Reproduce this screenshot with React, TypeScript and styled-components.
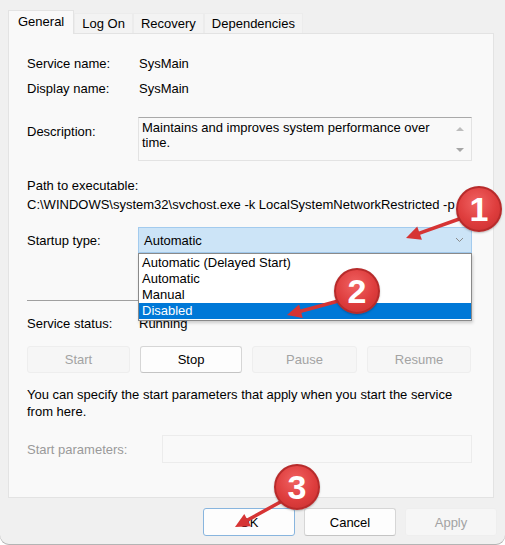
import styled, { createGlobalStyle, css } from 'styled-components'

const GlobalStyle = createGlobalStyle`
  html, body {
    margin: 0;
    padding: 0;
    background: #ffffff;
  }
  body {
    font-family: 'Liberation Sans', Arial, sans-serif;
    font-size: 13px;
    color: #000;
  }
`

const Window = styled.div`
  position: relative;
  width: 505px;
  height: 545px;
  background: #f0f0f0;
  border-radius: 0 0 9px 9px;
  overflow: hidden;
  box-shadow: inset 0 -1px 0 #b4b4b4;
`

const TabStrip = styled.div`
  display: flex;
  align-items: flex-end;
  height: 33px;
  padding-left: 8px;
`

const Tab = styled.div<{ $active?: boolean }>`
  box-sizing: border-box;
  height: 20px;
  padding: 0 7px;
  line-height: 20px;
  background: #f3f3f3;
  border: 1px solid #ececec;
  border-bottom: none;
  white-space: nowrap;

  ${(p) =>
    p.$active &&
    css`
      height: 24px;
      line-height: 22px;
      background: #f9f9f9;
      border-color: #e3e3e3;
      margin-bottom: -1px;
      position: relative;
      z-index: 1;
      padding: 0 9px;
    `}
`

const Panel = styled.div`
  box-sizing: border-box;
  margin: 0 11px 0 8px;
  height: 465px;
  background: #f9f9f9;
  border: 1px solid #e3e3e3;
  padding: 19px 21px 0 18px;
  position: relative;
`

const Row = styled.div<{ $top?: number; $height?: number; $label?: number }>`
  display: grid;
  grid-template-columns: ${(p) => p.$label ?? 111}px 1fr;
  align-items: center;
  margin-top: ${(p) => p.$top ?? 0}px;
  height: ${(p) => p.$height ?? 20}px;
`

const TopRow = styled(Row)`
  align-items: start;
`

const Label = styled.span<{ $disabled?: boolean; $offset?: number }>`
  color: ${(p) => (p.$disabled ? '#9a9a9a' : '#000')};
  padding-top: ${(p) => p.$offset ?? 0}px;
  white-space: nowrap;
`

const Value = styled.span`
  padding-left: 1px;
  white-space: nowrap;
`

const TextBox = styled.div`
  position: relative;
  box-sizing: border-box;
  height: 44px;
  background: #f9f9f9;
  border: 1px solid #e3e3e3;
  border-top-color: #a9a9a9;
  padding: 2px 24px 0 3px;
  line-height: 15px;
`

const ScrollArrow = styled.span<{ $down?: boolean }>`
  position: absolute;
  right: 7px;
  ${(p) => (p.$down ? 'bottom: 8px;' : 'top: 9px;')}
  width: 0;
  height: 0;
  border-left: 4px solid transparent;
  border-right: 4px solid transparent;
  ${(p) => (p.$down ? 'border-top: 4px solid #a6a6a6;' : 'border-bottom: 4px solid #bdbdbd;')}
`

const Line = styled.div<{ $top?: number }>`
  margin-top: ${(p) => p.$top ?? 0}px;
  line-height: 18px;
  height: 18px;
  white-space: nowrap;
`

const ComboWrap = styled.div`
  position: relative;
  height: 26px;
`

const Combo = styled.div`
  box-sizing: border-box;
  height: 26px;
  background: #cce4f7;
  border: 1px solid #a3cbee;
  padding: 0 0 0 5px;
  display: flex;
  align-items: center;
  justify-content: space-between;
`

const Chevron = styled.svg`
  margin-right: 7px;
`

const DropList = styled.ul`
  position: absolute;
  top: 26px;
  left: 0;
  right: 0;
  margin: 0;
  padding: 1px 0 1px;
  list-style: none;
  background: #ffffff;
  border: 1px solid #8a8a8a;
  box-shadow: 1px 2px 3px rgba(0, 0, 0, 0.18);
  z-index: 5;
`

const DropItem = styled.li<{ $selected?: boolean }>`
  height: 16px;
  line-height: 16px;
  padding-left: 3px;
  white-space: nowrap;
  ${(p) =>
    p.$selected &&
    css`
      background: #0078d7;
      color: #ffffff;
    `}
`

const Separator = styled.div<{ $top?: number }>`
  margin-top: ${(p) => p.$top ?? 0}px;
  height: 1px;
  background: #a0a0a0;
`

const ButtonRow = styled.div`
  display: grid;
  grid-template-columns: 103px 102px 105px 104px;
  column-gap: 10px;
  margin-top: 13px;
  height: 27px;
`

const Button = styled.div<{ $disabled?: boolean; $default?: boolean }>`
  box-sizing: border-box;
  height: 27px;
  display: flex;
  align-items: center;
  justify-content: center;
  background: #fdfdfd;
  border: 1px solid #d6d6d6;
  border-bottom-color: #c4c4c4;
  border-radius: 3px;
  color: #000;

  ${(p) =>
    p.$disabled &&
    css`
      background: #f6f6f6;
      border-color: #eeeeee;
      color: #a3a3a3;
    `}

  ${(p) =>
    p.$default &&
    css`
      border-color: #88b5de;
      background: #fdfdfd;
    `}
`

const Paragraph = styled.p`
  margin: 13px 0 0;
  line-height: 17px;
`

const Input = styled.div`
  box-sizing: border-box;
  height: 28px;
  background: #f9f9f9;
  border: 1px solid #ececec;
`

const Footer = styled.div`
  display: flex;
  justify-content: flex-end;
  gap: 9px;
  margin-top: 10px;
  padding-right: 8px;
`

const FooterButton = styled(Button)`
  width: 92px;
  height: 28px;
`

const Overlay = styled.svg`
  position: absolute;
  left: 0;
  top: 0;
  pointer-events: none;
  z-index: 10;
`

const Badge = styled.div<{ $x: number; $y: number }>`
  position: absolute;
  left: ${(p) => p.$x - 23}px;
  top: ${(p) => p.$y - 23}px;
  width: 46px;
  height: 46px;
  box-sizing: border-box;
  border-radius: 50%;
  background: radial-gradient(circle at 45% 35%, #f06262 0%, #de3d3d 55%, #c62e2e 100%);
  border: 2px solid #b72b2b;
  box-shadow: 0 1px 2px rgba(0, 0, 0, 0.25);
  color: #ffffff;
  font-family: 'Liberation Sans', Arial, sans-serif;
  font-weight: bold;
  font-size: 34px;
  line-height: 42px;
  text-align: center;
  z-index: 11;
`

type Arrow = { x1: number; y1: number; x2: number; y2: number }

const arrows: Arrow[] = [
  { x1: 462, y1: 218, x2: 406, y2: 238 },
  { x1: 342, y1: 300, x2: 287, y2: 315 },
  { x1: 284, y1: 500, x2: 235, y2: 527 },
]

const arrowHead = ({ x1, y1, x2, y2 }: Arrow) => {
  const a = Math.atan2(y2 - y1, x2 - x1)
  const len = 16
  const spread = 0.45
  const p1 = [x2 - len * Math.cos(a - spread), y2 - len * Math.sin(a - spread)]
  const p2 = [x2 - len * Math.cos(a + spread), y2 - len * Math.sin(a + spread)]
  return `${x2},${y2} ${p1[0]},${p1[1]} ${p2[0]},${p2[1]}`
}

const badges = [
  { n: 1, x: 479, y: 209 },
  { n: 2, x: 357, y: 291 },
  { n: 3, x: 297, y: 487 },
]

export default function App() {
  return (
    <>
      <GlobalStyle />
      <Window>
        <TabStrip>
          <Tab $active>General</Tab>
          <Tab>Log On</Tab>
          <Tab>Recovery</Tab>
          <Tab>Dependencies</Tab>
        </TabStrip>

        <Panel>
          <Row>
            <Label>Service name:</Label>
            <Value>SysMain</Value>
          </Row>
          <Row $top={5}>
            <Label>Display name:</Label>
            <Value>SysMain</Value>
          </Row>
          <TopRow $top={19} $height={44}>
            <Label $offset={7}>Description:</Label>
            <TextBox>
              Maintains and improves system performance over time.
              <ScrollArrow />
              <ScrollArrow $down />
            </TextBox>
          </TopRow>

          <Line $top={16}>Path to executable:</Line>
          <Line $top={1}>C:\WINDOWS\system32\svchost.exe -k LocalSystemNetworkRestricted -p</Line>

          <Row $top={13} $height={26}>
            <Label>Startup type:</Label>
            <ComboWrap>
              <Combo>
                Automatic
                <Chevron width="9" height="6" viewBox="0 0 9 6">
                  <path d="M1 1 L4.5 4.5 L8 1" fill="none" stroke="#8a8a8a" strokeWidth="1" />
                </Chevron>
              </Combo>
              <DropList>
                <DropItem>Automatic (Delayed Start)</DropItem>
                <DropItem>Automatic</DropItem>
                <DropItem>Manual</DropItem>
                <DropItem $selected>Disabled</DropItem>
              </DropList>
            </ComboWrap>
          </Row>

          <Separator $top={47} />

          <Row $top={12}>
            <Label>Service status:</Label>
            <Value>Running</Value>
          </Row>

          <ButtonRow>
            <Button $disabled>Start</Button>
            <Button>Stop</Button>
            <Button $disabled>Pause</Button>
            <Button $disabled>Resume</Button>
          </ButtonRow>

          <Paragraph>
            You can specify the start parameters that apply when you start the service
            <br />
            from here.
          </Paragraph>

          <Row $top={15} $height={28} $label={135}>
            <Label $disabled>Start parameters:</Label>
            <Input />
          </Row>
        </Panel>

        <Footer>
          <FooterButton $default>OK</FooterButton>
          <FooterButton>Cancel</FooterButton>
          <FooterButton $disabled>Apply</FooterButton>
        </Footer>

        <Overlay width="505" height="545" viewBox="0 0 505 545">
          {arrows.map((a, i) => (
            <g key={i}>
              <line
                x1={a.x1}
                y1={a.y1}
                x2={a.x2 + (a.x1 - a.x2) * 0.18}
                y2={a.y2 + (a.y1 - a.y2) * 0.18}
                stroke="#d63434"
                strokeWidth="3.5"
                strokeLinecap="round"
              />
              <polygon points={arrowHead(a)} fill="#d63434" />
            </g>
          ))}
        </Overlay>

        {badges.map((b) => (
          <Badge key={b.n} $x={b.x} $y={b.y}>
            {b.n}
          </Badge>
        ))}
      </Window>
    </>
  )
}
